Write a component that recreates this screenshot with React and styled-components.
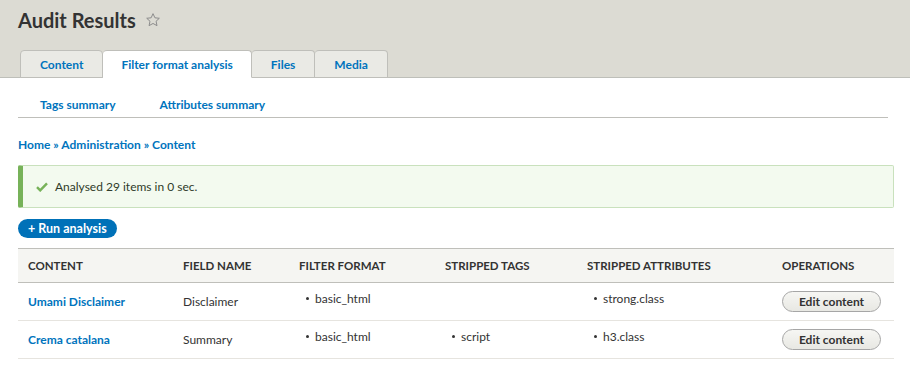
import React from "react";
import styled, { createGlobalStyle } from "styled-components";

const GlobalStyle = createGlobalStyle`
  body {
    margin: 0;
    background: #fff;
    color: #333;
    font-family: Lato, "Open Sans", sans-serif;
  }
  * { box-sizing: border-box; }
`;

const Header = styled.header`
  background: #dcdbd3;
  border-bottom: 1px solid #bebfb9;
  padding: 0 18px;
  height: 78px;
  display: flex;
  flex-direction: column;
  justify-content: space-between;
`;

const TitleRow = styled.div`
  display: flex;
  align-items: center;
  gap: 9px;
  padding-top: 7px;
`;

const Title = styled.h1`
  margin: 0;
  font-size: 20px;
  font-weight: 700;
  color: #333;
  line-height: 26px;
`;

const Tabs = styled.ul`
  display: flex;
  list-style: none;
  margin: 0 0 -1px 2px;
  padding: 0;
`;

const Tab = styled.li`
  height: 28px;
  padding: 0 ${(p) => (p.$active ? "18px" : "19px")};
  display: flex;
  align-items: center;
  font-size: 12px;
  font-weight: 700;
  color: #0074bd;
  background: ${(p) => (p.$active ? "#fff" : "#eaeae5")};
  border: 1px solid #bfbfba;
  border-bottom: ${(p) => (p.$active ? "1px solid #fff" : "1px solid #bfbfba")};
  border-left-width: ${(p) => (p.$first ? "1px" : "0")};
  border-radius: 4px 4px 0 0;
`;

const Main = styled.main`
  padding: 0 16px 0 18px;
`;

const SubTabs = styled.ul`
  display: flex;
  list-style: none;
  margin: 0 6px 0 0;
  padding: 0;
  height: 40px;
  align-items: center;
  border-bottom: 1px solid #bfbfba;
`;

const SubTab = styled.li`
  padding: 13px 22px 0;
  font-size: 12px;
  font-weight: 700;
  color: #0074bd;
`;

const Breadcrumb = styled.nav`
  margin-top: 19px;
  font-size: 12px;
  font-weight: 700;
  color: #0074bd;
  line-height: 16px;
`;

const Message = styled.div`
  margin-top: 12px;
  height: 43px;
  display: flex;
  align-items: center;
  gap: 7px;
  padding-left: 13px;
  background: #f3faef;
  border: 1px solid #c9e1bd;
  border-left: 5px solid #77b259;
  border-radius: 2px;
  font-size: 12px;
  color: #2f3a29;
`;

const RunButton = styled.button`
  margin-top: 11px;
  height: 19px;
  padding: 0 10px;
  border: 0;
  border-radius: 10px;
  background: #0071b8;
  color: #fff;
  font-family: inherit;
  font-size: 12.5px;
  font-weight: 700;
  display: inline-flex;
  align-items: center;
  cursor: pointer;
`;

const Table = styled.table`
  margin-top: 10px;
  width: 100%;
  border-collapse: collapse;
  table-layout: fixed;
  font-size: 12px;
`;

const Th = styled.th`
  height: 34px;
  padding: 0 10px;
  text-align: left;
  background: #f5f5f2;
  border-top: 1px solid #bfbfba;
  border-bottom: 1px solid #bfbfba;
  font-size: 11.5px;
  font-weight: 700;
  text-transform: uppercase;
  color: #333;
`;

const Td = styled.td`
  height: 38px;
  padding: 0 10px;
  border-bottom: 1px solid #e6e4df;
  font-weight: ${(p) => (p.$link ? 700 : 400)};
  color: ${(p) => (p.$link ? "#0074bd" : "#333")};
`;

const Items = styled.ul`
  list-style: none;
  margin: 0;
  padding: 0 0 6px 7px;
`;

const Item = styled.li`
  display: flex;
  align-items: center;
  gap: 6px;
  &::before {
    content: "";
    width: 3px;
    height: 3px;
    border-radius: 50%;
    background: #333;
  }
`;

const EditButton = styled.button`
  width: 99px;
  height: 21px;
  border: 1px solid #a6a6a6;
  border-radius: 11px;
  background: linear-gradient(#f6f6f3, #e8e8e3);
  color: #333;
  font-family: inherit;
  font-size: 12px;
  font-weight: 700;
  cursor: pointer;
`;

const Star = () => (
  <svg width="16" height="16" viewBox="0 0 24 24" fill="none" stroke="#8c8c8c" strokeWidth="1.5" strokeLinejoin="round">
    <path d="M12 2.5l2.9 6.2 6.6.7-4.9 4.5 1.4 6.6L12 17.2l-5.9 3.3 1.4-6.6-4.9-4.5 6.6-.7z" />
  </svg>
);

const Check = () => (
  <svg width="12" height="10" viewBox="0 0 12 10">
    <path d="M1 5.2l3.2 3.2L11 1.4" fill="none" stroke="#77b259" strokeWidth="2.4" />
  </svg>
);

const rows = [
  { title: "Umami Disclaimer", field: "Disclaimer", format: ["basic_html"], tags: [], attrs: ["strong.class"] },
  { title: "Crema catalana", field: "Summary", format: ["basic_html"], tags: ["script"], attrs: ["h3.class"] },
];

const List = ({ items }) =>
  items.length ? (
    <Items>
      {items.map((i) => (
        <Item key={i}>{i}</Item>
      ))}
    </Items>
  ) : null;

export default function App() {
  return (
    <>
      <GlobalStyle />
      <Header>
        <TitleRow>
          <Title>Audit Results</Title>
          <Star />
        </TitleRow>
        <Tabs>
          <Tab $first>Content</Tab>
          <Tab $active>Filter format analysis</Tab>
          <Tab>Files</Tab>
          <Tab>Media</Tab>
        </Tabs>
      </Header>
      <Main>
        <SubTabs>
          <SubTab>Tags summary</SubTab>
          <SubTab>Attributes summary</SubTab>
        </SubTabs>
        <Breadcrumb>Home » Administration » Content</Breadcrumb>
        <Message>
          <Check />
          Analysed 29 items in 0 sec.
        </Message>
        <RunButton>+ Run analysis</RunButton>
        <Table>
          <colgroup>
            <col style={{ width: 155 }} />
            <col style={{ width: 116 }} />
            <col style={{ width: 146 }} />
            <col style={{ width: 142 }} />
            <col style={{ width: 195 }} />
            <col />
          </colgroup>
          <thead>
            <tr>
              <Th>Content</Th>
              <Th>Field name</Th>
              <Th>Filter format</Th>
              <Th>Stripped tags</Th>
              <Th>Stripped attributes</Th>
              <Th>Operations</Th>
            </tr>
          </thead>
          <tbody>
            {rows.map((r) => (
              <tr key={r.title}>
                <Td $link>{r.title}</Td>
                <Td>{r.field}</Td>
                <Td><List items={r.format} /></Td>
                <Td><List items={r.tags} /></Td>
                <Td><List items={r.attrs} /></Td>
                <Td><EditButton>Edit content</EditButton></Td>
              </tr>
            ))}
          </tbody>
        </Table>
      </Main>
    </>
  );
}
